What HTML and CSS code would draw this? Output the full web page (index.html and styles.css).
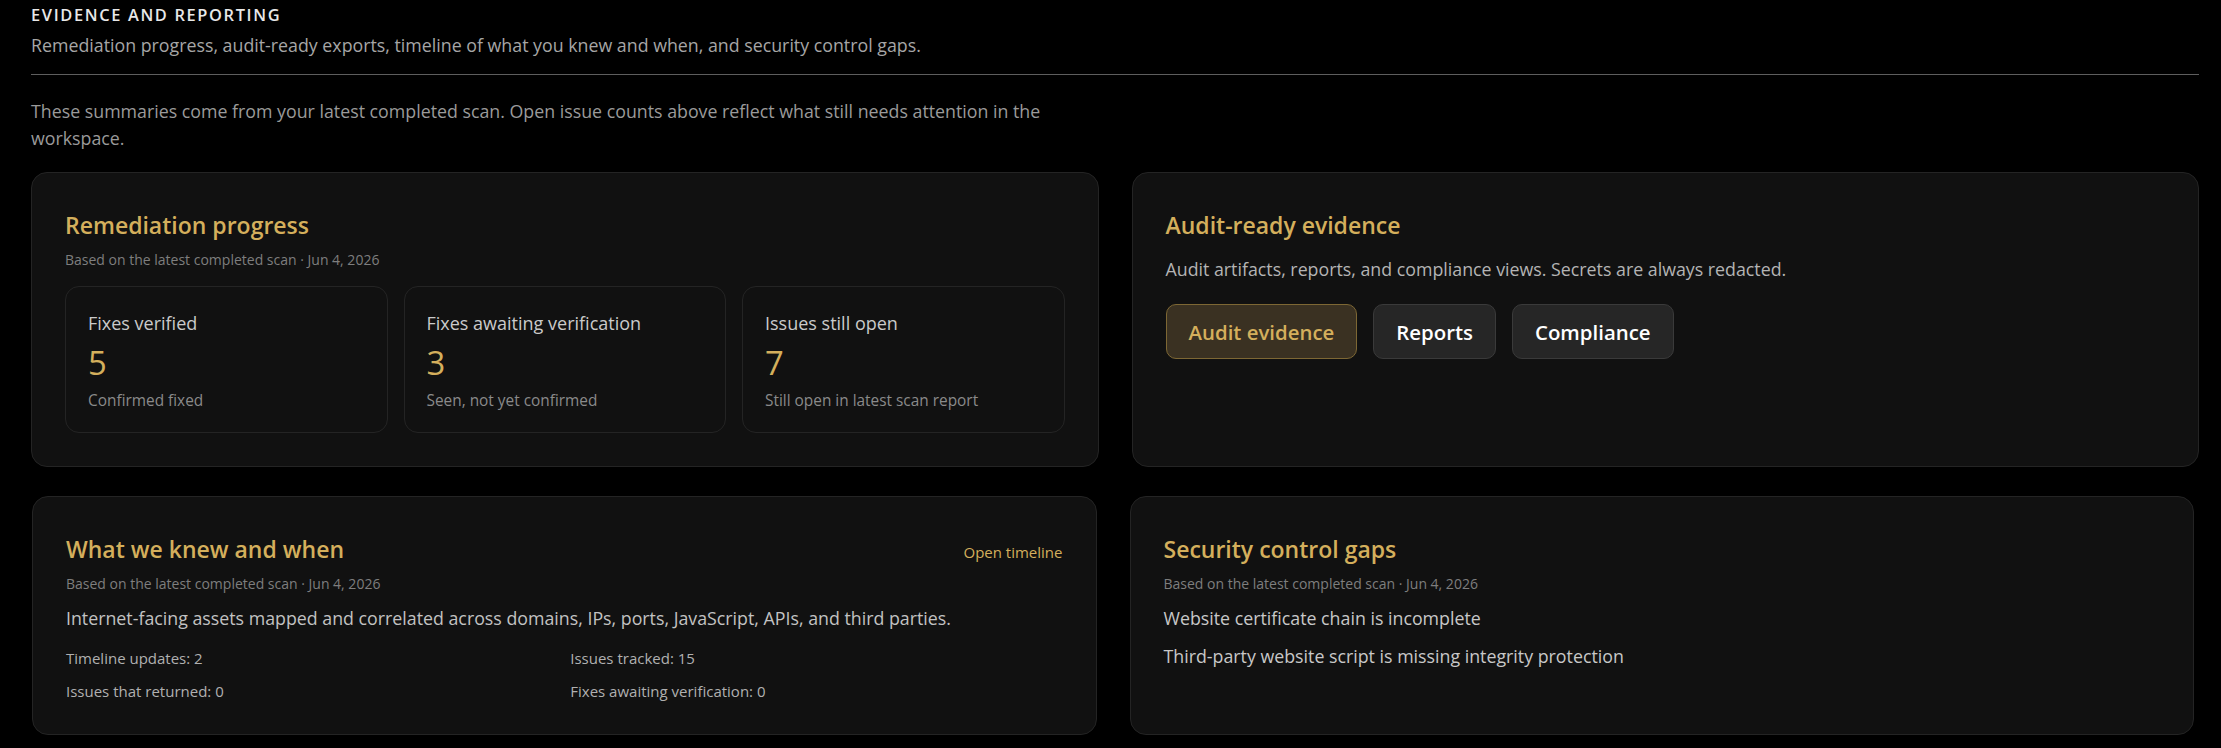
FILE: index.html
```html
<!DOCTYPE html>
<html lang="en">
<head>
    <meta charset="UTF-8">
    <meta name="viewport" content="width=device-width, initial-scale=1.0">
    <title>Evidence and Reporting</title>
    <link rel="stylesheet" href="styles.css">
</head>
<body>
    <div class="page">
        <div class="section-head">
            <h2>EVIDENCE AND REPORTING</h2>
            <p>Remediation progress, audit-ready exports, timeline of what you knew and when, and security control gaps.</p>
        </div>

        <p class="intro">These summaries come from your latest completed scan. Open issue counts above reflect what still needs attention in the workspace.</p>

        <div class="grid">
            <div class="card">
                <h3 class="card-title">Remediation progress</h3>
                <div class="meta">Based on the latest completed scan · Jun 4, 2026</div>
                <div class="stats">
                    <div class="stat">
                        <div class="stat-label">Fixes verified</div>
                        <div class="stat-value">5</div>
                        <div class="stat-note">Confirmed fixed</div>
                    </div>
                    <div class="stat">
                        <div class="stat-label">Fixes awaiting verification</div>
                        <div class="stat-value">3</div>
                        <div class="stat-note">Seen, not yet confirmed</div>
                    </div>
                    <div class="stat">
                        <div class="stat-label">Issues still open</div>
                        <div class="stat-value">7</div>
                        <div class="stat-note">Still open in latest scan report</div>
                    </div>
                </div>
            </div>

            <div class="card">
                <h3 class="card-title">Audit-ready evidence</h3>
                <p class="card-text">Audit artifacts, reports, and compliance views. Secrets are always redacted.</p>
                <div class="tabs">
                    <button class="tab active">Audit evidence</button>
                    <button class="tab">Reports</button>
                    <button class="tab">Compliance</button>
                </div>
            </div>
        </div>

        <div class="grid grid-lower">
            <div class="card">
                <div class="card-head">
                    <h3 class="card-title">What we knew and when</h3>
                    <a class="link" href="#">Open timeline</a>
                </div>
                <div class="meta">Based on the latest completed scan · Jun 4, 2026</div>
                <p class="card-text tight">Internet-facing assets mapped and correlated across domains, IPs, ports, JavaScript, APIs, and third parties.</p>
                <div class="facts">
                    <div>Timeline updates: 2</div>
                    <div>Issues tracked: 15</div>
                    <div>Issues that returned: 0</div>
                    <div>Fixes awaiting verification: 0</div>
                </div>
            </div>

            <div class="card">
                <h3 class="card-title">Security control gaps</h3>
                <div class="meta">Based on the latest completed scan · Jun 4, 2026</div>
                <ul class="gaps">
                    <li>Website certificate chain is incomplete</li>
                    <li>Third-party website script is missing integrity protection</li>
                </ul>
            </div>
        </div>
    </div>
</body>
</html>
```

FILE: styles.css
```css
body {
    margin: 0;
    background-color: #000;
    color: #e6e6e6;
    font-family: "Open Sans", sans-serif;
}
.page {
    padding: 5px 22px 0 31px;
}
.section-head {
    padding-bottom: 17px;
    border-bottom: 1px solid #5e5e5e;
}
.section-head h2 {
    margin: 0;
    font-size: 16.4px;
    line-height: 20px;
    font-weight: 600;
    letter-spacing: 0.1em;
    color: #e8e8e8;
}
.section-head p {
    margin: 8px 0 0;
    font-size: 17.8px;
    line-height: 24px;
    color: #a6a6a6;
}
.intro {
    margin: 23px 0 20px;
    max-width: 1068px;
    font-size: 17.8px;
    line-height: 27px;
    color: #9a9a9a;
}
.grid {
    display: grid;
    grid-template-columns: 1fr 1fr;
    gap: 33px;
}
.grid-lower {
    margin: 29px 5px 0 1px;
}
.card {
    background-color: #111;
    border: 1px solid #242424;
    border-radius: 16px;
    padding: 37px 33px 33px;
}
.card-head {
    display: flex;
    justify-content: space-between;
    align-items: baseline;
}
.card-title {
    margin: 0;
    font-size: 23px;
    line-height: 30px;
    font-weight: 600;
    color: #d4af5c;
}
.link {
    font-size: 15px;
    color: #d4af5c;
    text-decoration: none;
}
.meta {
    margin-top: 10px;
    font-size: 14px;
    line-height: 20px;
    color: #7e7e7e;
}
.stats {
    display: grid;
    grid-template-columns: repeat(3, 1fr);
    gap: 16px;
    margin-top: 16px;
}
.stat {
    border: 1px solid #242424;
    border-radius: 14px;
    padding: 24px 22px 21px;
}
.stat-label {
    font-size: 18px;
    line-height: 24px;
    color: #cacaca;
}
.stat-value {
    margin-top: 8px;
    font-size: 32.8px;
    line-height: 40px;
    font-weight: 500;
    color: #d4af5c;
}
.stat-note {
    margin-top: 8px;
    font-size: 15.4px;
    line-height: 20px;
    color: #8a8a8a;
}
.card-text {
    margin: 17px 0 0;
    font-size: 17.8px;
    line-height: 24px;
    color: #b4b4b4;
}
.card-text.tight {
    margin-top: 12px;
    color: #c2c2c2;
}
.tabs {
    display: flex;
    gap: 16px;
    margin-top: 23px;
}
.tab {
    height: 55px;
    padding: 0 22px;
    font-family: inherit;
    font-size: 20.4px;
    font-weight: 600;
    color: #fff;
    background-color: #262626;
    border: 1px solid #3a3a3a;
    border-radius: 10px;
}
.tab.active {
    color: #d4af5c;
    background-color: #3a3122;
    border-color: #7d6734;
}
.facts {
    display: grid;
    grid-template-columns: 1fr 1fr;
    gap: 13px 12px;
    margin-top: 18px;
    font-size: 15px;
    line-height: 20px;
    color: #b0b0b0;
}
.gaps {
    list-style: none;
    margin: 12px 0 0;
    padding: 0;
    font-size: 17.8px;
    line-height: 24px;
    color: #c8c8c8;
}
.gaps li + li {
    margin-top: 13.5px;
}
```
